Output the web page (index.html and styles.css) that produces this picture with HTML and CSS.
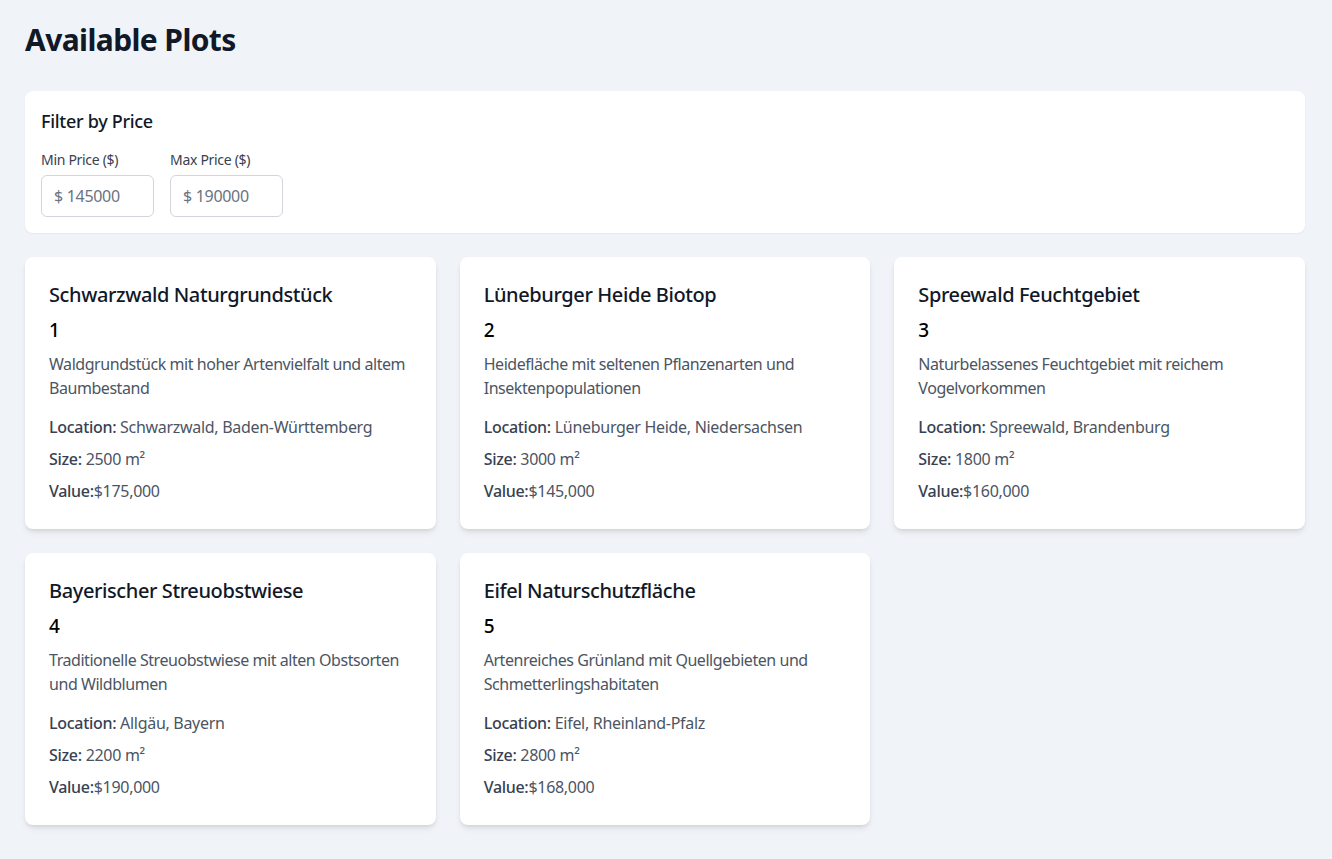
FILE: index.html
```html
<!DOCTYPE html>
<html lang="de">
<head>
<meta charset="utf-8">
<title>Available Plots</title>
<link rel="stylesheet" href="styles.css">
</head>
<body>
<main class="page">
  <h1 class="page-title">Available Plots</h1>
  <section class="filter-card">
    <h2 class="filter-title">Filter by Price</h2>
    <div class="filter-row">
      <label class="field">
        <span class="field-label">Min Price ($)</span>
        <input class="field-input" type="text" placeholder="$ 145000">
      </label>
      <label class="field">
        <span class="field-label">Max Price ($)</span>
        <input class="field-input" type="text" placeholder="$ 190000">
      </label>
    </div>
  </section>
  <section class="plot-grid">
    <article class="plot-card">
      <h3 class="plot-name">Schwarzwald Naturgrundstück</h3>
      <p class="plot-id">1</p>
      <p class="plot-desc">Waldgrundstück mit hoher Artenvielfalt und altem Baumbestand</p>
      <div class="plot-details">
        <p><span class="key">Location:</span> Schwarzwald, Baden-Württemberg</p>
        <p><span class="key">Size:</span> 2500 m²</p>
        <p><span class="key">Value:</span>$175,000</p>
      </div>
    </article>
    <article class="plot-card">
      <h3 class="plot-name">Lüneburger Heide Biotop</h3>
      <p class="plot-id">2</p>
      <p class="plot-desc">Heidefläche mit seltenen Pflanzenarten und Insektenpopulationen</p>
      <div class="plot-details">
        <p><span class="key">Location:</span> Lüneburger Heide, Niedersachsen</p>
        <p><span class="key">Size:</span> 3000 m²</p>
        <p><span class="key">Value:</span>$145,000</p>
      </div>
    </article>
    <article class="plot-card">
      <h3 class="plot-name">Spreewald Feuchtgebiet</h3>
      <p class="plot-id">3</p>
      <p class="plot-desc">Naturbelassenes Feuchtgebiet mit reichem Vogelvorkommen</p>
      <div class="plot-details">
        <p><span class="key">Location:</span> Spreewald, Brandenburg</p>
        <p><span class="key">Size:</span> 1800 m²</p>
        <p><span class="key">Value:</span>$160,000</p>
      </div>
    </article>
    <article class="plot-card">
      <h3 class="plot-name">Bayerischer Streuobstwiese</h3>
      <p class="plot-id">4</p>
      <p class="plot-desc">Traditionelle Streuobstwiese mit alten Obstsorten und Wildblumen</p>
      <div class="plot-details">
        <p><span class="key">Location:</span> Allgäu, Bayern</p>
        <p><span class="key">Size:</span> 2200 m²</p>
        <p><span class="key">Value:</span>$190,000</p>
      </div>
    </article>
    <article class="plot-card">
      <h3 class="plot-name">Eifel Naturschutzfläche</h3>
      <p class="plot-id">5</p>
      <p class="plot-desc">Artenreiches Grünland mit Quellgebieten und Schmetterlingshabitaten</p>
      <div class="plot-details">
        <p><span class="key">Location:</span> Eifel, Rheinland-Pfalz</p>
        <p><span class="key">Size:</span> 2800 m²</p>
        <p><span class="key">Value:</span>$168,000</p>
      </div>
    </article>
  </section>
</main>
</body>
</html>
```
FILE: styles.css
```css
* { box-sizing: border-box; }
html, body { margin: 0; padding: 0; }
body {
  background: #f0f4f8;
  font-family: "Noto Sans", "Open Sans", sans-serif;
  color: #111827;
  min-height: 859px;
  letter-spacing: -0.3px;
}
p, h1, h2, h3 { margin: 0; }
.page {
  padding: 22px 27px 24px 25px;
}
.page-title {
  font-size: 30px;
  line-height: 36px;
  font-weight: 700;
  color: #111827;
  letter-spacing: -0.6px;
  margin: 0 0 33px 0;
}
.filter-card {
  background: #fff;
  border-radius: 8px;
  padding: 16px;
  box-shadow: 0 1px 2px rgba(0,0,0,0.05);
  margin-bottom: 24px;
}
.filter-title {
  font-size: 18px;
  line-height: 28px;
  font-weight: 500;
  color: #111827;
  margin-bottom: 15px;
}
.filter-row {
  display: flex;
  gap: 16px;
}
.field {
  display: flex;
  flex-direction: column;
}
.field-label {
  font-size: 14px;
  line-height: 20px;
  color: #374151;
  margin-bottom: 5px;
}
.field-input {
  width: 113px;
  height: 42px;
  border: 1px solid #d1d5db;
  border-radius: 6px;
  padding: 0 12px;
  font-family: inherit;
  font-size: 16px;
  letter-spacing: -0.3px;
  color: #111827;
  background: #fff;
}
.field-input::placeholder { color: #6b7280; }
.plot-grid {
  display: grid;
  grid-template-columns: repeat(3, 1fr);
  gap: 24px;
}
.plot-card {
  background: #fff;
  border-radius: 8px;
  padding: 24px;
  box-shadow: 0 4px 6px -1px rgba(0,0,0,0.1), 0 2px 4px -2px rgba(0,0,0,0.1);
}
.plot-name {
  font-size: 20px;
  line-height: 28px;
  font-weight: 500;
  color: #111827;
  letter-spacing: -0.4px;
  margin-bottom: 8px;
}
.plot-id {
  font-size: 19px;
  line-height: 27px;
  font-weight: 500;
  color: #000;
  margin-bottom: 8px;
}
.plot-desc {
  font-size: 16px;
  line-height: 24px;
  color: #4b5563;
  letter-spacing: -0.45px;
  margin-bottom: 15px;
}
.plot-details p {
  font-size: 16px;
  line-height: 24px;
  color: #4b5563;
  margin-bottom: 8px;
}
.plot-details p:last-child { margin-bottom: 2px; }
.plot-details .key {
  font-weight: 500;
  color: #374151;
}
```
